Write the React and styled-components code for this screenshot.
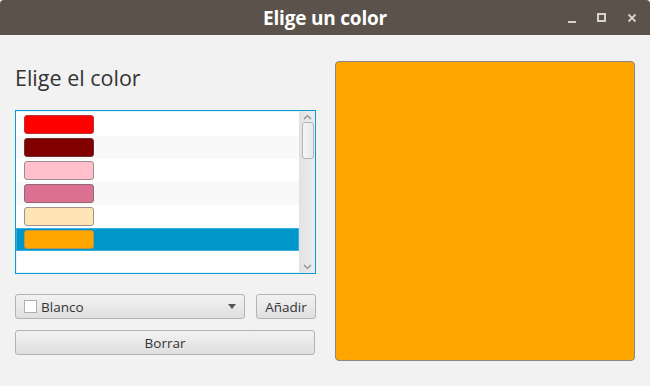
import React from "react";
import styled, { createGlobalStyle } from "styled-components";

const Global = createGlobalStyle`
  html, body { margin: 0; padding: 0; background: #f2f2f2; }
  body { font-family: "Open Sans", "Noto Sans", sans-serif; }
  * { box-sizing: border-box; }
`;

const Window = styled.div`
  width: 650px;
  height: 386px;
  background: #f2f2f2;
  display: flex;
  flex-direction: column;
  overflow: hidden;
`;

const TitleBar = styled.div`
  height: 35px;
  background: #5a524b;
  display: flex;
  align-items: center;
  justify-content: center;
  position: relative;
  border-radius: 4px 4px 0 0;
`;

const Title = styled.div`
  color: #ffffff;
  font-family: "Open Sans", sans-serif;
  font-weight: 700;
  font-size: 19px;
  letter-spacing: -0.2px;
`;

const Controls = styled.div`
  position: absolute;
  right: 13px;
  top: 0;
  height: 35px;
  display: flex;
  align-items: center;
  gap: 20px;
`;

const Body = styled.div`
  display: grid;
  grid-template-columns: 301px 300px;
  column-gap: 19px;
  padding: 26px 15px 0 15px;
`;

const LeftCol = styled.div`
  display: flex;
  flex-direction: column;
`;

const Heading = styled.div`
  margin-top: 4px;
  height: 25px;
  line-height: 25px;
  font-size: 21.5px;
  color: #333333;
  padding-left: 0px;
`;

const ListBox = styled.div`
  margin-top: 20px;
  height: 164px;
  border: 1px solid #0a9bd0;
  background: #ffffff;
  display: flex;
  box-shadow: inset 0 0 0 1px #e3f3fa;
`;

const Rows = styled.div`
  flex: 1;
  padding-top: 2px;
  display: flex;
  flex-direction: column;
`;

const Row = styled.div`
  height: 23px;
  padding-left: 8px;
  padding-top: 2px;
  background: ${(p) => (p.$selected ? "#0096c9" : p.$odd ? "#f9f9f9" : "#ffffff")};
  box-shadow: ${(p) => (p.$selected ? "inset 0 0 0 1px #35aede" : "none")};
`;

const Swatch = styled.div`
  width: 70px;
  height: 19px;
  border-radius: 3px;
  background: ${(p) => p.$color};
  border: 1px solid ${(p) => p.$border};
`;

const ScrollBar = styled.div`
  width: 16px;
  background: linear-gradient(to right, #e3e3e3, #ececec);
  border-left: 1px solid #e0e0e0;
  display: flex;
  flex-direction: column;
  align-items: center;
  justify-content: space-between;
  padding: 3px 0 3px 0;
`;

const Thumb = styled.div`
  width: 12px;
  height: 37px;
  margin-top: 2px;
  border: 1px solid #b4b4b4;
  border-radius: 3px;
  background: linear-gradient(to right, #f6f6f6, #e8e8e8);
`;

const ScrollTop = styled.div`
  display: flex;
  flex-direction: column;
  align-items: center;
`;

const ControlRow = styled.div`
  margin-top: 20px;
  display: flex;
  gap: 11px;
`;

const Combo = styled.div`
  width: 230px;
  height: 25px;
  border: 1px solid #b3b3b3;
  border-radius: 3px;
  background: linear-gradient(to bottom, #f2f2f2, #dfdfdf);
  display: flex;
  align-items: center;
  padding: 0 8px 0 8px;
  font-size: 13.5px;
  color: #333;
`;

const ComboSwatch = styled.div`
  width: 13px;
  height: 13px;
  background: #ffffff;
  border: 1px solid #b0b0b0;
  margin-right: 4px;
`;

const ComboText = styled.span`
  flex: 1;
`;

const Arrow = styled.div`
  width: 0;
  height: 0;
  border-left: 4px solid transparent;
  border-right: 4px solid transparent;
  border-top: 5px solid #555;
`;

const Button = styled.button`
  width: ${(p) => p.$width};
  height: 25px;
  border: 1px solid #b3b3b3;
  border-radius: 3px;
  background: linear-gradient(to bottom, #f2f2f2, #dfdfdf);
  font-family: "Open Sans", sans-serif;
  font-size: 13.5px;
  color: #333;
  padding: 0;
  margin-top: ${(p) => p.$mt || "0"};
`;

const Preview = styled.div`
  width: 300px;
  height: 300px;
  background: ${(p) => p.$color};
  border: 1px solid #878787;
  border-radius: 4px;
`;

const colors = [
  { c: "#ff0000", b: "#b83535" },
  { c: "#800000", b: "#6e3030" },
  { c: "#ffc0cb", b: "#9a8b8e" },
  { c: "#db7093", b: "#8f6a76" },
  { c: "#ffe4b5", b: "#9c9488" },
  { c: "#ffa500", b: "#b8954f" },
];

export default function App() {
  return (
    <Window>
      <Global />
      <TitleBar>
        <Title>Elige un color</Title>
        <Controls>
          <svg width="10" height="10" viewBox="0 0 10 10">
            <rect x="1" y="8" width="8" height="2" fill="#d6d2ce" />
          </svg>
          <svg width="10" height="10" viewBox="0 0 10 10">
            <rect x="1" y="1" width="7" height="7" fill="none" stroke="#d6d2ce" strokeWidth="2" />
          </svg>
          <svg width="10" height="10" viewBox="0 0 10 10">
            <path d="M1.5 1.5 L8.5 8.5 M8.5 1.5 L1.5 8.5" stroke="#d6d2ce" strokeWidth="1.8" />
          </svg>
        </Controls>
      </TitleBar>
      <Body>
        <LeftCol>
          <Heading>Elige el color</Heading>
          <ListBox>
            <Rows>
              {colors.map((s, i) => (
                <Row key={i} $odd={i % 2 === 1} $selected={i === 5}>
                  <Swatch $color={s.c} $border={s.b} />
                </Row>
              ))}
            </Rows>
            <ScrollBar>
              <ScrollTop>
                <svg width="9" height="6" viewBox="0 0 9 6">
                  <path d="M1 5 L4.5 1.5 L8 5" fill="none" stroke="#8c8c8c" strokeWidth="1.2" />
                </svg>
                <Thumb />
              </ScrollTop>
              <svg width="9" height="6" viewBox="0 0 9 6">
                <path d="M1 1 L4.5 4.5 L8 1" fill="none" stroke="#8c8c8c" strokeWidth="1.2" />
              </svg>
            </ScrollBar>
          </ListBox>
          <ControlRow>
            <Combo>
              <ComboSwatch />
              <ComboText>Blanco</ComboText>
              <Arrow />
            </Combo>
            <Button $width="60px">Añadir</Button>
          </ControlRow>
          <Button $width="300px" $mt="11px">Borrar</Button>
        </LeftCol>
        <Preview $color="#ffa500" />
      </Body>
    </Window>
  );
}
